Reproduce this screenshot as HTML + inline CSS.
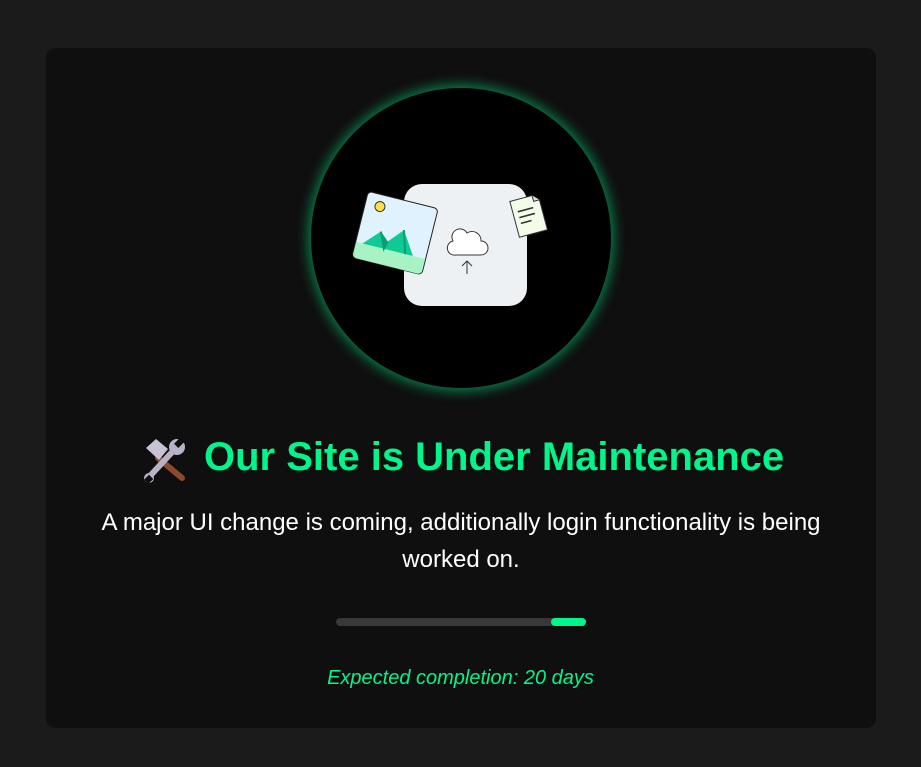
<!DOCTYPE html>
<html><head><meta charset="utf-8"><style>
html,body{margin:0;padding:0;background:#1b1b1b;width:921px;height:767px;overflow:hidden;font-family:"Liberation Sans",Arial,sans-serif}
.card{position:absolute;left:46px;top:48px;width:830px;height:680px;background:#0f0f0f;border-radius:10px}
.circle{position:absolute;left:311px;top:88px;width:300px;height:300px;border-radius:50%;background:#000;box-shadow:0 0 12px 3px rgba(0,245,138,.5)}
h1{position:absolute;left:204px;top:433px;margin:0;white-space:nowrap;font-size:40px;font-weight:bold;color:#00f58a;line-height:48px}
p.d{position:absolute;left:86px;width:750px;top:504px;margin:0;text-align:center;font-size:24px;color:#fff;line-height:37px}
.bar{position:absolute;left:336px;top:618px;width:250px;height:8px;border-radius:4px;background:#383838}
.fill{position:absolute;right:0;top:0;width:35px;height:8px;border-radius:4px;background:#00f58a}
.exp{position:absolute;left:0;width:921px;top:667px;text-align:center;font-style:italic;color:#00f58a;font-size:20px}
</style></head><body>
<div class="card"></div>
<div class="circle"></div>
<svg style="position:absolute;left:0;top:0" width="921" height="767">
  <rect x="404" y="184" width="123" height="122" rx="18" fill="#edf1f4"/>
  <g transform="rotate(14 395 233)">
    <rect x="359" y="199" width="72" height="68" rx="4" fill="#e0f2fe" stroke="#222" stroke-width="1"/>
    <path d="M359.5 251 H430.5 V263 a4 4 0 0 1 -4 4 H363.5 a4 4 0 0 1 -4 -4 Z" fill="#a7f3c4"/>
    <path d="M366 251 L381 235 L390 243 L403 228 L418 251 Z" fill="#10c994"/>
    <path d="M381 235 L388 251 L390 243 M403 228 L410 251" fill="#0b9e72" stroke="#0b9e72" stroke-width="2"/>
    <circle cx="374" cy="211" r="5" fill="#fde047" stroke="#333" stroke-width="1"/>
  </g>
  <g transform="rotate(-15 529 215)">
    <path d="M514 197 H537 L543 203 V234 H514 Z" fill="#f3fbe9" stroke="#333" stroke-width="1"/>
    <path d="M537 197 V203 H543" fill="#ddd" stroke="#333" stroke-width="1"/>
    <path d="M519 209 H535 M519 215 H535 M519 221 H530" stroke="#333" stroke-width="1.6"/>
  </g>
  <path d="M456 255 H481 a7 7 0 0 0 0 -14 a9 9 0 0 0 -14 -8 a8 8 0 0 0 -14 8 a7 7 0 0 0 3 14 Z" fill="#fff" stroke="#333" stroke-width="1"/>
  <path d="M467 274 V261 M462 266 L467 261 L472 266" stroke="#333" stroke-width="1" fill="none"/>
  <g transform="translate(144,438)">
    <path d="M14 20 L38 40" stroke="#8b4a2b" stroke-width="6" stroke-linecap="round"/>
    <path d="M2 10 L12 1 L24 11 L15 22 Z" fill="#c9c2d4"/>
    <path d="M6 38 L30 12" stroke="#b9b2c6" stroke-width="6" stroke-linecap="round"/>
    <circle cx="33" cy="9" r="8" fill="#b9b2c6"/>
    <rect x="32" y="0" width="6" height="9" fill="#0f0f0f" transform="rotate(45 35 5)"/>
    <circle cx="5" cy="40" r="5" fill="#b9b2c6"/>
    <rect x="2" y="38" width="6" height="7" fill="#0f0f0f" transform="rotate(45 5 41)"/>
  </g>
</svg>
<h1>Our Site is Under Maintenance</h1>
<p class="d">A major UI change is coming, additionally login functionality is being worked on.</p>
<div class="bar"><div class="fill"></div></div>
<div class="exp">Expected completion: 20 days</div>
</body></html>
